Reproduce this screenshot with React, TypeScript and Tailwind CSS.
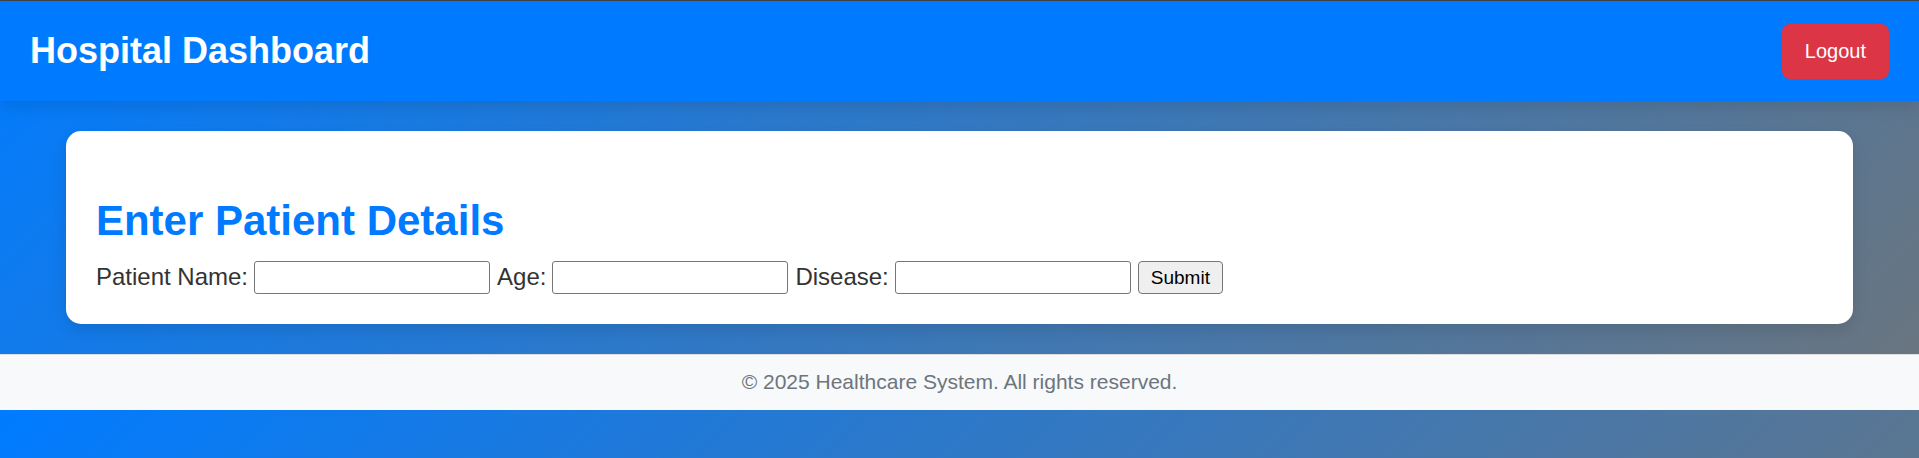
type FieldProps = { id: string; label: string; type?: string };

function Field({ id, label, type = "text" }: FieldProps) {
  return (
    <div className="flex items-center gap-[6px]">
      <label htmlFor={id} className="pb-0.5">
        {label}
      </label>
      <input
        id={id}
        name={id}
        type={type}
        className="h-[33px] w-[236px] rounded-[3px] border border-[#767676] bg-white px-1 text-xl"
      />
    </div>
  );
}

export default function App() {
  return (
    <div className="min-h-screen border-t border-[#444444] bg-[linear-gradient(135deg,#007bff,#6c757d)] bg-[length:100%_409px] font-['Liberation_Sans',Arial,sans-serif] text-[#333333]">
      <header className="flex min-h-[100px] items-center justify-between bg-[#007bff] px-[30px] text-white shadow-[0_6px_15px_rgba(0,0,0,0.1)]">
        <h1 className="text-4xl font-bold">Hospital Dashboard</h1>
        <button
          type="button"
          className="cursor-pointer rounded-lg bg-[#dc3545] px-[23px] py-4 text-xl leading-[23px]"
        >
          Logout
        </button>
      </header>

      <main className="mx-auto my-[30px] w-[calc(90%+60px)] rounded-[15px] bg-white px-[30px] pt-[66px] pb-[30px] shadow-[0_6px_15px_rgba(0,0,0,0.1)]">
        <h2 className="mb-4 text-[42px] leading-[48px] font-bold text-[#007bff]">
          Enter Patient Details
        </h2>
        <form
          className="flex flex-wrap items-center gap-[7px] text-2xl leading-[27px]"
          onSubmit={(event) => event.preventDefault()}
        >
          <Field id="patient-name" label="Patient Name:" />
          <Field id="age" label="Age:" type="number" />
          <Field id="disease" label="Disease:" />
          <button
            type="submit"
            className="h-[33px] rounded-[4px] border border-[#767676] bg-[#efefef] px-3 text-[19px] leading-[23px] text-black"
          >
            Submit
          </button>
        </form>
      </main>

      <footer className="border-t border-[#dddddd] bg-[#f8f9fa] pt-[15px] pb-4 text-center text-[21px] leading-6 text-[#6c757d]">
        <p>© 2025 Healthcare System. All rights reserved.</p>
      </footer>
    </div>
  );
}
